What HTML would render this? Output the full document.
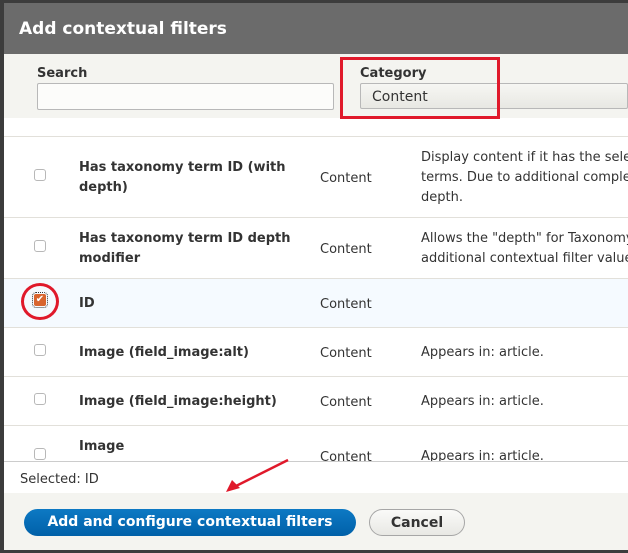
<!DOCTYPE html>
<html><head><meta charset="utf-8"><style>
*{margin:0;padding:0;box-sizing:border-box}
html,body{width:628px;height:553px;overflow:hidden}
body{background:#3c3c3c;font-family:"DejaVu Sans","Liberation Sans",sans-serif;font-size:13px;color:#333;position:relative}
#w{position:absolute;left:0;top:0;width:628px;height:553px;overflow:hidden}
.a{position:absolute}
.dlg{left:4px;top:3px;width:624px;height:547px;background:#fff}
.title{left:4px;top:3px;width:624px;height:51px;background:#6b6b6b;color:#fff;font-weight:bold;font-size:17px;padding:16px 0 0 15px}
.filt{left:4px;top:54px;width:624px;height:64px;background:#f4f4f0}
.lbl{font-weight:bold;font-size:13px;color:#333}
.inp{border:1px solid #b8b8b8;border-radius:2px;background:#fcfcfa}
.row{left:4px;width:624px;border-top:1px solid #e2e0da}
.cb{width:12px;height:12px;border:1px solid #b8b8b8;border-radius:3px;background:#fff;left:34px}
.nm{left:79px;font-weight:bold;line-height:20px}
.ct{left:320px}
.ds{left:421px;line-height:20px;white-space:nowrap;width:207px;overflow:hidden}
.bp{left:4px;top:493px;width:624px;height:57px;background:#f4f4f0}
</style></head><body><div id="w">
<div class="a dlg"></div>
<div class="a title">Add contextual filters</div>
<div class="a filt"></div>
<div class="a lbl" style="left:37px;top:66px">Search</div>
<div class="a inp" style="left:37px;top:83px;width:297px;height:27px"></div>
<div class="a lbl" style="left:360px;top:66px">Category</div>
<div class="a inp" style="left:360px;top:83px;width:268px;height:26px;background:linear-gradient(#f6f6f3,#e8e8e3)"></div>
<div class="a" style="left:372px;top:89px;font-size:14px">Content</div>
<div class="a" style="left:340px;top:57px;width:160px;height:62px;border:3px solid #e0192b"></div>

<div class="a row" style="top:136px;height:81px"></div>
<div class="a cb" style="top:169px"></div>
<div class="a nm" style="top:158px">Has taxonomy term ID (with<br>depth)</div>
<div class="a ct" style="top:171px">Content</div>
<div class="a ds" style="top:148px">Display content if it has the selected<br>terms. Due to additional complexity<br>depth.</div>

<div class="a row" style="top:217px;height:61px"></div>
<div class="a cb" style="top:240px"></div>
<div class="a nm" style="top:229px">Has taxonomy term ID depth<br>modifier</div>
<div class="a ct" style="top:242px">Content</div>
<div class="a ds" style="top:229px">Allows the "depth" for Taxonomy<br>additional contextual filter value</div>

<div class="a row" style="top:278px;height:49px;background:#f5faff"></div>
<div class="a" style="left:34px;top:294px;width:12px;height:12px;border-radius:2px;background:#d8652f;outline:1px dotted #333;outline-offset:1px;color:#fff;font-size:10px;line-height:12px;text-align:center">✔</div>
<div class="a" style="left:21px;top:283px;width:38px;height:37px;border:3px solid #e0192b;border-radius:50%"></div>
<div class="a nm" style="top:294px">ID</div>
<div class="a ct" style="top:297px">Content</div>

<div class="a row" style="top:327px;height:49px"></div>
<div class="a cb" style="top:344px"></div>
<div class="a nm" style="top:343px">Image (field_image:alt)</div>
<div class="a ct" style="top:346px">Content</div>
<div class="a ds" style="top:343px">Appears in: article.</div>

<div class="a row" style="top:376px;height:49px"></div>
<div class="a cb" style="top:393px"></div>
<div class="a nm" style="top:392px">Image (field_image:height)</div>
<div class="a ct" style="top:395px">Content</div>
<div class="a ds" style="top:392px">Appears in: article.</div>

<div class="a row" style="top:425px;height:37px"></div>
<div class="a cb" style="top:448px"></div>
<div class="a nm" style="top:437px">Image</div>
<div class="a ct" style="top:450px">Content</div>
<div class="a ds" style="top:447px">Appears in: article.</div>

<div class="a" style="left:4px;top:461px;width:624px;height:32px;background:#fff;border-top:1px solid #ccc"></div>
<div class="a" style="left:20px;top:472px">Selected: ID</div>
<div class="a bp"></div>
<svg class="a" style="left:220px;top:455px" width="75" height="40"><line x1="68" y1="5" x2="10" y2="34" stroke="#e0192b" stroke-width="2.5"/><path d="M6 37 L12 25 L20 33 Z" fill="#e0192b"/></svg>
<div class="a" style="left:24px;top:509px;width:332px;height:27px;border-radius:14px;background:linear-gradient(#0d79c4,#0060a8);color:#fff;font-weight:bold;font-size:14px;text-align:center;line-height:27px">Add and configure contextual filters</div>
<div class="a" style="left:369px;top:509px;width:96px;height:27px;border-radius:14px;border:1px solid #a6a6a6;background:linear-gradient(#fafaf8,#e8e8e4);font-weight:bold;font-size:14px;text-align:center;line-height:26px">Cancel</div>
</div></body></html>
